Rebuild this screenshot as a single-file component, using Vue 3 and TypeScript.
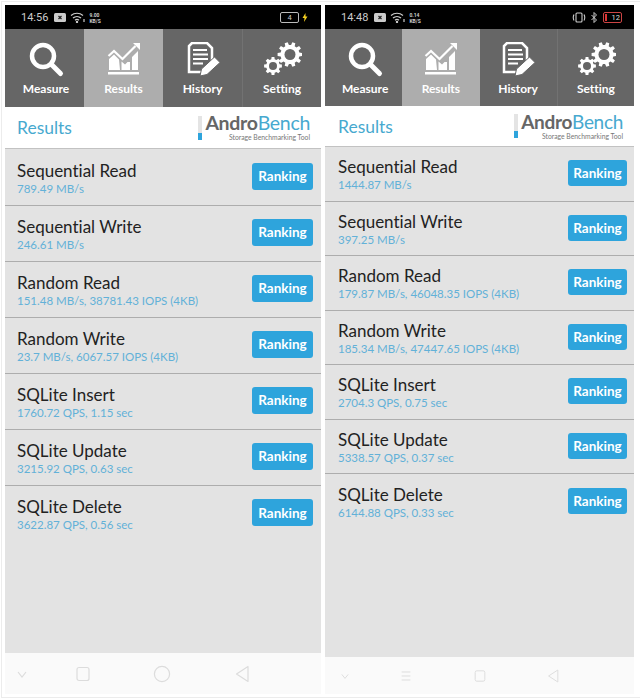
<script setup lang="ts">
interface Row {
  name: string;
  value: string;
}

interface Phone {
  id: string;
  time: string;
  speed: string;
  rows: Row[];
  nav: string[];
}

const tabs = ['Measure', 'Results', 'History', 'Setting'];

const phones: Phone[] = [
  {
    id: 'left',
    time: '14:56',
    speed: '9.00',
    nav: ['down', 'square', 'circle', 'back'],
    rows: [
      { name: 'Sequential Read', value: '789.49 MB/s' },
      { name: 'Sequential Write', value: '246.61 MB/s' },
      { name: 'Random Read', value: '151.48 MB/s, 38781.43 IOPS (4KB)' },
      { name: 'Random Write', value: '23.7 MB/s, 6067.57 IOPS (4KB)' },
      { name: 'SQLite Insert', value: '1760.72 QPS, 1.15 sec' },
      { name: 'SQLite Update', value: '3215.92 QPS, 0.63 sec' },
      { name: 'SQLite Delete', value: '3622.87 QPS, 0.56 sec' }
    ]
  },
  {
    id: 'right',
    time: '14:48',
    speed: '0.14',
    nav: ['down', 'menu', 'square', 'back'],
    rows: [
      { name: 'Sequential Read', value: '1444.87 MB/s' },
      { name: 'Sequential Write', value: '397.25 MB/s' },
      { name: 'Random Read', value: '179.87 MB/s, 46048.35 IOPS (4KB)' },
      { name: 'Random Write', value: '185.34 MB/s, 47447.65 IOPS (4KB)' },
      { name: 'SQLite Insert', value: '2704.3 QPS, 0.75 sec' },
      { name: 'SQLite Update', value: '5338.57 QPS, 0.37 sec' },
      { name: 'SQLite Delete', value: '6144.88 QPS, 0.33 sec' }
    ]
  }
];

const gearPath = (cx: number, cy: number, r: number, teeth: number) => {
  const outer = r;
  const inner = r * 0.76;
  const step = (Math.PI * 2) / teeth;
  const pts: string[] = [];
  for (let i = 0; i < teeth; i++) {
    const a = i * step;
    const w = step * 0.2;
    const list: [number, number][] = [
      [inner, a - step * 0.32],
      [outer, a - w],
      [outer, a + w],
      [inner, a + step * 0.32]
    ];
    for (const [rad, ang] of list) {
      pts.push(`${(cx + rad * Math.cos(ang)).toFixed(2)} ${(cy + rad * Math.sin(ang)).toFixed(2)}`);
    }
  }
  return 'M' + pts.join('L') + 'Z';
};
</script>

<template>
  <div class="page">
    <div class="frame">
      <div v-for="phone in phones" :key="phone.id" class="phone" :class="phone.id">
        <div class="status">
          <span class="time">{{ phone.time }}</span>
          <svg class="st-icon" width="12" height="9" viewBox="0 0 12 9">
            <rect x="0" y="0" width="12" height="9" rx="1.5" fill="#ccc" />
            <path d="M4.5 3l3 3M7.5 3l-3 3" stroke="#222" stroke-width="1.2" />
          </svg>
          <svg class="st-icon" width="15" height="11" viewBox="0 0 15 11" fill="none" stroke="#ccc" stroke-width="1.2">
            <path d="M1 3.5c3.500-3 8.500-3 12 0M3 6c2.300-2 5.700-2 8 0M5 8.300c1.200-1 2.800-1 4 0" />
            <circle cx="7" cy="10" r=".6" fill="#ccc" />
            <path d="M14 7v3" />
          </svg>
          <div class="speed">
            <span>{{ phone.speed }}</span>
            <span>KB/S</span>
          </div>
          <span class="spacer"></span>
          <template v-if="phone.id === 'left'">
            <span class="batt">4</span>
            <svg class="bolt" width="6" height="9" viewBox="0 0 6 9">
              <path d="M3.500 0L0.500 5h2L2 9l3.500-5.500h-2z" fill="#f5d020" />
            </svg>
          </template>
          <template v-else>
            <svg width="14" height="11" viewBox="0 0 14 11" fill="none" stroke="#ccc" stroke-width="1.100">
              <rect x="4" y="1" width="6" height="9" rx="1" />
              <path d="M2 2.500c-1 2-1 4 0 6M12 2.500c1 2 1 4 0 6" />
            </svg>
            <svg class="bt" width="7" height="11" viewBox="0 0 7 11" fill="none" stroke="#ccc" stroke-width="1">
              <path d="M0.500 3l5 5-2.500 2.500v-10L5.500 3l-5 5" />
            </svg>
            <span class="batt low"><i></i>12</span>
          </template>
        </div>

        <div class="tabs">
          <div v-for="tab in tabs" :key="tab" class="tab" :class="{ active: tab === 'Results' }">
            <svg class="tab-icon" viewBox="0 0 40 36" width="40" height="36">
              <g v-if="tab === 'Measure'" fill="none" stroke="#fff">
                <circle cx="17" cy="14" r="11" stroke-width="4.500" />
                <path d="M26 23l8.500 8.500" stroke-width="5" stroke-linecap="round" />
              </g>
              <g v-else-if="tab === 'Results'" fill="#fff">
                <path d="M5 28V17l5-4.500 5 5 1 10.500zM17.500 28V19.500l3.500 3 2.500-2.500 2.500 0V28zM28 28V15l6-6v19z" />
                <path d="M4.500 14l5.500-5 8.500 8 13-13" fill="none" stroke="#fff" stroke-width="2.200" />
                <path d="M29 1h7v7z" />
                <rect x="4" y="30" width="31" height="2.500" />
              </g>
              <g v-else-if="tab === 'History'">
                <path d="M9 1h15l5 5v13l-7 11H6V4z" fill="none" stroke="#fff" stroke-width="2.500" />
                <path d="M10 8h14M10 12.500h15M10 17h15M10 21.500h10" stroke="#fff" stroke-width="2" />
                <path d="M17 34l1.500-7 13-12 5.500 5.500-13 12z" fill="#fff" stroke="#666" stroke-width="1" />
              </g>
              <g v-else fill="#fff">
                <path :d="gearPath(28, 12.5, 12.5, 10)" />
                <circle cx="28" cy="12.5" r="5.500" fill="#666" />
                <path :d="gearPath(11, 24, 9, 8)" />
                <circle cx="11" cy="24" r="4" fill="#666" />
              </g>
            </svg>
            <span class="tab-label">{{ tab }}</span>
          </div>
        </div>

        <div class="head">
          <span class="head-title">Results</span>
          <div class="logo">
            <span class="logo-bar"></span>
            <div class="logo-text">
              <div class="logo-name"><b>Andro</b>Bench</div>
              <div class="logo-sub">Storage Benchmarking Tool</div>
            </div>
          </div>
        </div>

        <div class="list">
          <div v-for="row in phone.rows" :key="row.name" class="row">
            <div class="row-text">
              <div class="row-name">{{ row.name }}</div>
              <div class="row-value">{{ row.value }}</div>
            </div>
            <button class="rank">Ranking</button>
          </div>
        </div>

        <div class="nav">
          <div v-for="item in phone.nav" :key="item" class="nav-cell">
            <svg width="18" height="18" viewBox="0 0 18 18" fill="none" stroke="#dcdcdc" stroke-width="1.200">
              <path v-if="item === 'down'" d="M5 7l4 5 4-5" />
              <rect v-else-if="item === 'square'" x="3" y="2.500" width="12" height="13" rx="2" />
              <circle v-else-if="item === 'circle'" cx="9" cy="9" r="7.600" />
              <path v-else-if="item === 'back'" d="M15 1.500v15L3.500 9z" stroke-linejoin="round" />
              <path v-else d="M3.500 4h11M3.500 9h11M3.500 14h11" />
            </svg>
          </div>
        </div>
      </div>
    </div>
  </div>
</template>

<style>
html, body { margin: 0; background: #fff; }
</style>

<style scoped>
.page {
  width: 640px;
  height: 699px;
  padding: 1px 0 1px 1px;
  box-sizing: border-box;
  font-family: "Lato", "Open Sans", sans-serif;
  font-variant-ligatures: none;
  overflow: hidden;
}

.frame {
  display: flex;
  height: 100%;
  box-sizing: border-box;
  padding: 3px 4px 3px 3px;
  gap: 4px;
  border: 1px solid #ececec;
  border-right: none;
  align-items: stretch;
}

.phone {
  display: flex;
  flex-direction: column;
  background: #e3e3e3;
}
.phone.left { width: 316px; --tab-h: 78px; --head-h: 42px; --row-h: 56px; --status-h: 24px; --nav-h: 41px; --pad: 12px; }
.phone.right { width: 309px; --tab-h: 77px; --head-h: 41px; --row-h: 54.5px; --status-h: 24px; --nav-h: 37px; --pad: 13px; }

.status {
  height: var(--status-h);
  flex: none;
  background: #000;
  color: #ccc;
  display: flex;
  align-items: center;
  padding: 1px 8px 0 16px;
  box-sizing: border-box;
  gap: 4px;
  font-family: "Roboto", sans-serif;
}
.time { font-size: 11px; margin-right: 2px; }
.speed {
  display: flex;
  flex-direction: column;
  font-size: 5px;
  line-height: 6px;
  font-weight: 700;
}
.spacer { flex: 1; }
.batt {
  width: 17px;
  height: 9px;
  border: 1px solid #bbb;
  border-radius: 2px;
  font-size: 7.500px;
  line-height: 9px;
  text-align: center;
  position: relative;
}
.batt.low { color: #ddd; border-color: #c44; width: 16px; display: flex; justify-content: flex-end; padding-right: 1px; }
.batt.low i { position: absolute; left: 1px; top: 1px; bottom: 1px; width: 2px; background: #d33; }
.bolt { margin-left: -1px; margin-right: 5px; }
.right .status { padding-right: 12px; }
.bt { margin: 0 1px; }

.tabs {
  height: var(--tab-h);
  flex: none;
  display: grid;
  grid-template-columns: repeat(4, 1fr);
  background: #666;
}
.tab {
  min-width: 0;
  display: flex;
  flex-direction: column;
  align-items: center;
  padding-top: 13px;
  box-sizing: border-box;
  border-left: 1px solid #727272;
}
.tab:first-child { border-left: none; padding-left: 3px; }
.tab.active { background: #adadad; border-left: none; }
.tab.active + .tab { border-left: none; }
.tab-icon { flex: none; }
.tab-label {
  color: #fff;
  font-size: 12px;
  font-weight: 700;
  line-height: 18px;
  margin-top: 2px;
}

.head {
  height: var(--head-h);
  flex: none;
  background: #fff;
  display: flex;
  align-items: center;
  justify-content: space-between;
  padding: 0 11px 0 12px;
  box-sizing: border-box;
  border-bottom: 1px solid #c2c2c2;
}
.right .head { padding-left: 13px; padding-right: 11px; }
.head-title { color: #47a9cf; font-size: 17.5px; }
.logo { display: flex; align-items: center; gap: 3px; }
.logo-bar {
  width: 4px;
  height: 24px;
  background: linear-gradient(#e4e4e4 70%, #2ea4dc 70%);
}
.logo-text { text-align: right; }
.logo-name { font-size: 19.5px; line-height: 18px; color: #47a9cf; letter-spacing: -0.3px; }
.right .logo-name { font-size: 19px; }
.logo-name b { color: #666; font-weight: 700; }
.logo-sub { font-size: 6.800px; line-height: 8px; color: #777; margin-top: 1px; }

.list { flex: 1; background: #e3e3e3; }
.left .list { padding-top: 1px; }
.row {
  height: var(--row-h);
  box-sizing: border-box;
  border-bottom: 1px solid #adadad;
  display: flex;
  align-items: center;
  justify-content: space-between;
  padding: 0 8px 0 var(--pad);
}
.row:last-child { border-bottom: none; }
.row-name { font-size: 17px; line-height: 21px; color: #222; }
.row-value { font-size: 11.500px; line-height: 15px; color: #62b1d8; }
.rank {
  width: 61px;
  height: 27px;
  border: none;
  border-radius: 3px;
  background: #2ea4dc;
  color: #fff;
  font-family: inherit;
  font-size: 13.5px;
  font-weight: 700;
  padding: 0;
}
.left .rank { margin-bottom: 3px; }
.right .row { padding-right: 7px; padding-bottom: 1px; }
.right .row-text { padding-top: 2px; }
.right .rank { width: 59px; height: 26px; }

.nav {
  height: var(--nav-h);
  flex: none;
  background: #fafafa;
  display: grid;
  align-items: center;
  justify-items: center;
}
.left .nav { grid-template-columns: 34px 88px 70px 90px; }
.right .nav { grid-template-columns: 40px 82px 66px 80px; }
.nav-cell { display: flex; }
.right .nav-cell svg { transform: scale(0.8); }
</style>
